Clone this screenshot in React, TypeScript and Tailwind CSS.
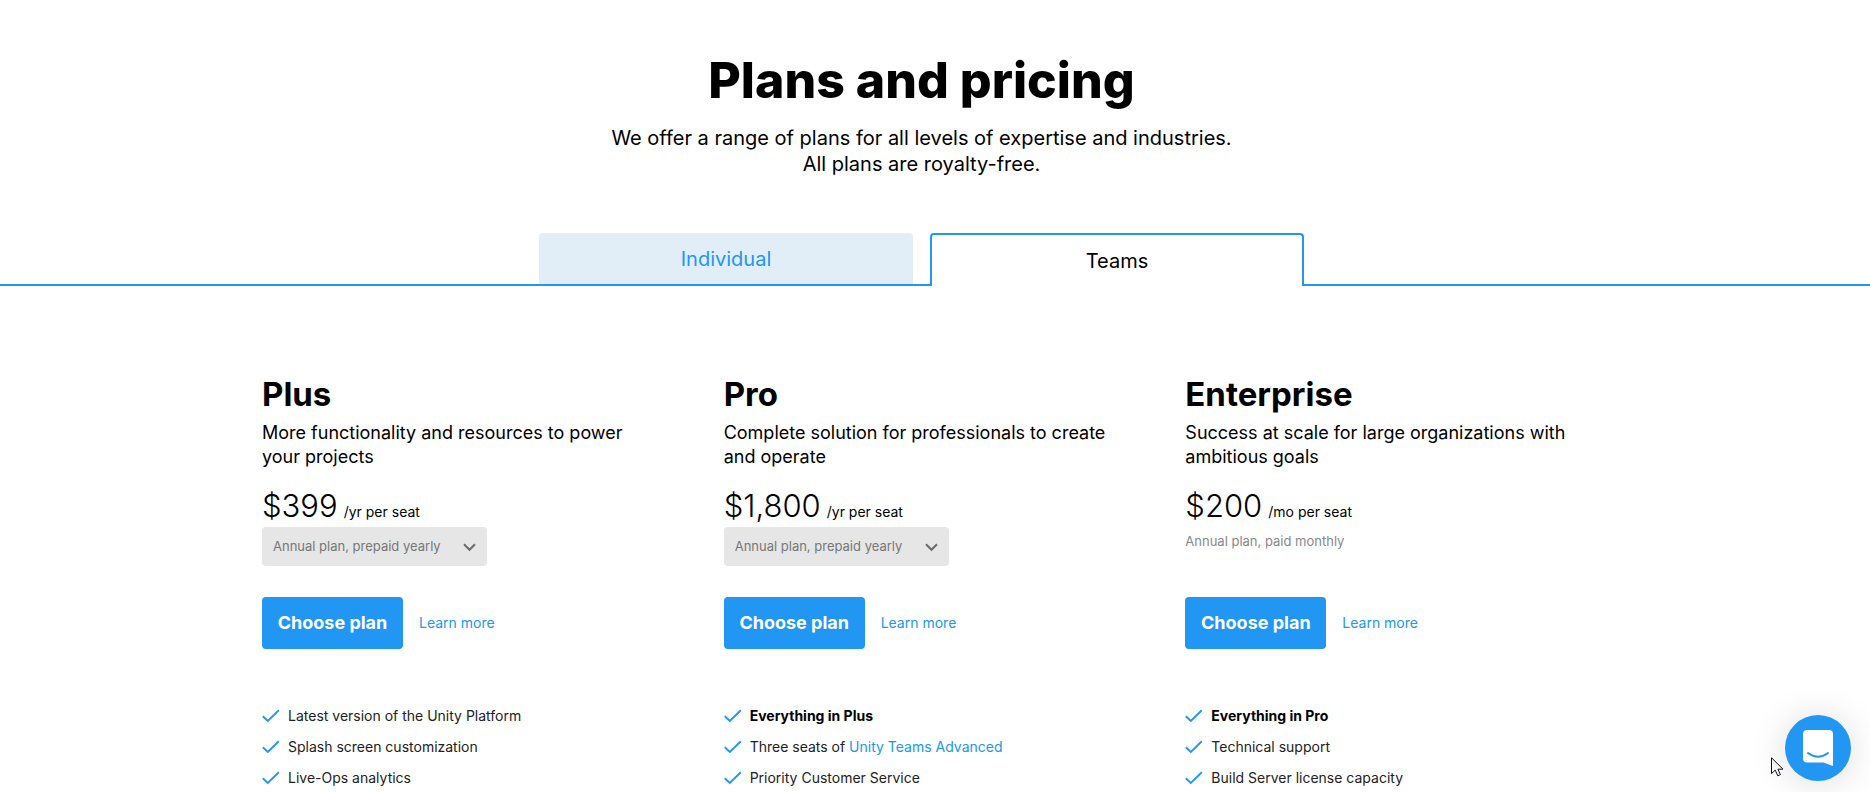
import React, { useState } from "react";

type Feature = { text: string; link?: string; bold?: boolean };

type Plan = {
  id: string;
  name: string;
  description: string;
  price: string;
  unit: string;
  billing: string;
  selectable: boolean;
  features: Feature[];
};

const plans: Plan[] = [
  {
    id: "plus",
    name: "Plus",
    description: "More functionality and resources to power your projects",
    price: "$399",
    unit: "/yr per seat",
    billing: "Annual plan, prepaid yearly",
    selectable: true,
    features: [
      { text: "Latest version of the Unity Platform" },
      { text: "Splash screen customization" },
      { text: "Live-Ops analytics" },
    ],
  },
  {
    id: "pro",
    name: "Pro",
    description: "Complete solution for professionals to create and operate",
    price: "$1,800",
    unit: "/yr per seat",
    billing: "Annual plan, prepaid yearly",
    selectable: true,
    features: [
      { text: "Everything in Plus", bold: true },
      { text: "Three seats of ", link: "Unity Teams Advanced" },
      { text: "Priority Customer Service" },
    ],
  },
  {
    id: "enterprise",
    name: "Enterprise",
    description: "Success at scale for large organizations with ambitious goals",
    price: "$200",
    unit: "/mo per seat",
    billing: "Annual plan, paid monthly",
    selectable: false,
    features: [
      { text: "Everything in Pro", bold: true },
      { text: "Technical support" },
      { text: "Build Server license capacity" },
    ],
  },
];

function CheckIcon() {
  return (
    <svg className="h-[14px] w-[18px] shrink-0" viewBox="0 0 18 14" fill="none" aria-hidden="true">
      <path d="M0.8 7.3 L5.8 11.9 L16.8 1.2" stroke="#2196f3" strokeWidth="1.9" />
    </svg>
  );
}

function PlanColumn({ plan }: { plan: Plan }) {
  return (
    <section className="px-[33px]">
      <h2 className="text-[33px] leading-10 font-bold">{plan.name}</h2>
      <p className="mt-[7px] text-lg leading-6">{plan.description}</p>
      <div className="mt-[17px] flex items-baseline gap-[6px] leading-10">
        <span className="text-[31px] font-light">{plan.price}</span>
        <span className="text-sm">{plan.unit}</span>
      </div>
      <div className="mt-px h-[70px]">
        {plan.selectable ? (
          <div className="relative w-[225px]">
            <select
              aria-label={`${plan.name} billing`}
              className="h-[39px] w-full appearance-none rounded bg-[#e6e6e6] pr-10 pl-[11px] text-[13px] text-[#777777]"
            >
              <option>{plan.billing}</option>
            </select>
            <svg
              className="pointer-events-none absolute top-4 right-[11px] h-[9px] w-[13px]"
              viewBox="0 0 13 9"
              fill="none"
              aria-hidden="true"
            >
              <path d="M1 1.2 L6.5 6.8 L12 1.2" stroke="#6b6b6b" strokeWidth="2" />
            </svg>
          </div>
        ) : (
          <p className="pt-1 text-[13px] leading-5 text-[#888888]">{plan.billing}</p>
        )}
      </div>
      <div className="flex items-center gap-4">
        <button type="button" className="h-[52px] w-[141px] rounded bg-[#2196f3] text-lg font-bold whitespace-nowrap text-white">
          Choose plan
        </button>
        <a href="#" className="text-sm text-[#2196f3]">
          Learn more
        </a>
      </div>
      <ul className="mt-[57px] flex flex-col gap-[11px]">
        {plan.features.map((f) => (
          <li key={f.text} className="flex items-center gap-2 text-sm leading-5 text-[#222222]">
            <CheckIcon />
            <span className={f.bold ? "font-bold text-black" : ""}>
              {f.text}
              {f.link && (
                <a href="#" className="text-[#2196f3]">
                  {f.link}
                </a>
              )}
            </span>
          </li>
        ))}
      </ul>
    </section>
  );
}

export default function App() {
  const [tab, setTab] = useState("Teams");
  return (
    <main className="h-screen overflow-hidden bg-white font-['Inter',sans-serif] text-black">
      <header className="pt-12 pr-[27px] text-center">
        <h1 className="text-[50px] leading-[64px] font-extrabold">Plans and pricing</h1>
        <p className="mt-[13px] text-xl leading-[26px]">
          We offer a range of plans for all levels of expertise and industries.
          <br />
          All plans are royalty-free.
        </p>
      </header>

      <div role="tablist" className="mt-14 flex h-[53px] justify-center gap-[17px] border-b-2 border-[#2196f3] pr-[27px]">
        {["Individual", "Teams"].map((name) => (
          <button
            key={name}
            type="button"
            role="tab"
            aria-selected={tab === name}
            onClick={() => setTab(name)}
            className={
              tab === name
                ? "-mb-[2px] h-[53px] w-[374px] rounded-t border-2 border-b-0 border-[#2196f3] bg-white text-xl"
                : "h-[51px] w-[374px] rounded-t bg-[#e2eef7] text-xl text-[#2196f3]"
            }
          >
            {name}
          </button>
        ))}
      </div>

      <div className="pt-[88px] pr-[27px]">
        <div className="mx-auto grid max-w-[1385px] grid-cols-3">
          {plans.map((plan) => (
            <PlanColumn key={plan.id} plan={plan} />
          ))}
        </div>
      </div>

      <svg className="pointer-events-none fixed right-[86px] bottom-[15px] h-[20px] w-[13px]" viewBox="0 0 13 20" aria-hidden="true">
        <path
          d="M0.5 0.8 V16.6 L4.2 13.1 L6.8 18.8 L9.4 17.6 L6.9 12.2 H12 Z"
          fill="#ffffff"
          stroke="#111122"
          strokeWidth="1"
        />
      </svg>

      <button
        type="button"
        aria-label="Open chat"
        className="fixed right-[19px] bottom-[11px] flex size-[66px] items-center justify-center rounded-full bg-[#2196f3] shadow-[0_2px_36px_rgba(0,0,0,0.14)]"
      >
        <svg className="h-[36px] w-[30px]" viewBox="0 0 30 36" fill="none" aria-hidden="true">
          <path d="M4 0 H26 Q30 0 30 4 V36 L20.5 32.5 H4 Q0 32.5 0 28.5 V4 Q0 0 4 0 Z" fill="#ffffff" />
          <path d="M5 23 Q15 30.5 25 23" stroke="#2196f3" strokeWidth="2" strokeLinecap="round" />
        </svg>
      </button>
    </main>
  );
}
